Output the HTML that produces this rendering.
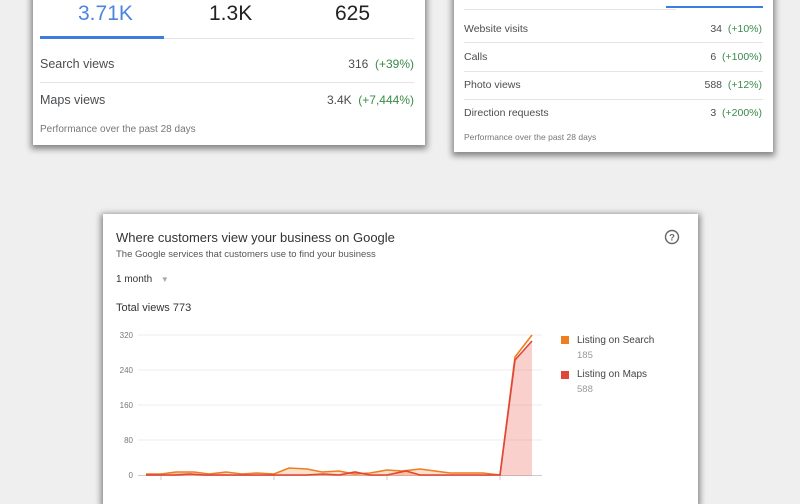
<!DOCTYPE html>
<html><head><style>
*{margin:0;padding:0;box-sizing:border-box}
body{width:800px;height:480px;background:#efefef;font-family:"Liberation Sans",sans-serif;position:relative;overflow:hidden;color:#4a4d50}
.card{position:absolute;background:#fff;box-shadow:0 2px 6px 2px rgba(0,0,0,.45)}
.abs{position:absolute;white-space:nowrap}
.g{color:#3a8a4a}
.line{position:absolute;height:1px;background:#e4e4e4}
</style></head><body>
<div class="card" style="left:33px;top:-10px;width:392px;height:155px">
  <div class="abs" style="left:45px;top:12px;font-size:21px;color:#4a86e0">3.71K</div>
  <div class="abs" style="left:176px;top:12px;font-size:21px;color:#222">1.3K</div>
  <div class="abs" style="left:302px;top:12px;font-size:21px;color:#222">625</div>
  <div style="position:absolute;left:7px;top:46px;width:124px;height:3px;background:#3b7de0"></div>
  <div class="line" style="left:131px;top:48px;width:250px"></div>
  <div class="abs" style="left:7px;top:67px;font-size:12.5px">Search views</div>
  <div class="abs" style="right:11px;top:67px;font-size:12px">316 &nbsp;<span class="g">(+39%)</span></div>
  <div class="line" style="left:7px;top:92px;width:374px"></div>
  <div class="abs" style="left:7px;top:103px;font-size:12.5px">Maps views</div>
  <div class="abs" style="right:11px;top:103px;font-size:12px">3.4K &nbsp;<span class="g">(+7,444%)</span></div>
  <div class="abs" style="left:7px;top:134px;font-size:10px;color:#777">Performance over the past 28 days</div>
</div>
<div class="card" style="left:454px;top:-10px;width:319px;height:162px">
  <div style="position:absolute;left:212px;top:16px;width:97px;height:2px;background:#3b7de0"></div>
  <div class="line" style="left:10px;top:19px;width:212px"></div>
  <div class="abs" style="left:10px;top:33px;font-size:10.5px">Website visits</div>
  <div class="abs" style="right:11px;top:33px;font-size:10.5px">34 &nbsp;<span class="g">(+10%)</span></div>
  <div class="line" style="left:10px;top:52px;width:299px"></div>
  <div class="abs" style="left:10px;top:61px;font-size:10.5px">Calls</div>
  <div class="abs" style="right:11px;top:61px;font-size:10.5px">6 &nbsp;<span class="g">(+100%)</span></div>
  <div class="line" style="left:10px;top:81px;width:299px"></div>
  <div class="abs" style="left:10px;top:89px;font-size:10.5px">Photo views</div>
  <div class="abs" style="right:11px;top:89px;font-size:10.5px">588 &nbsp;<span class="g">(+12%)</span></div>
  <div class="line" style="left:10px;top:109px;width:299px"></div>
  <div class="abs" style="left:10px;top:117px;font-size:10.5px">Direction requests</div>
  <div class="abs" style="right:11px;top:117px;font-size:10.5px">3 &nbsp;<span class="g">(+200%)</span></div>
  <div class="abs" style="left:10px;top:142px;font-size:8.5px;color:#777">Performance over the past 28 days</div>
</div>
<div class="card" style="left:103px;top:214px;width:595px;height:290px">
  <div class="abs" style="left:13px;top:16px;font-size:13px;color:#333">Where customers view your business on Google</div>
  <div class="abs" style="left:13px;top:35px;font-size:9.5px;color:#555">The Google services that customers use to find your business</div>
  <div class="abs" style="left:13px;top:60px;font-size:10px;color:#333">1 month <span style="color:#aaa;font-size:8px;margin-left:6px">▼</span></div>
  <div class="abs" style="left:13px;top:88px;font-size:11px;color:#333">Total views 773</div>
  <svg style="position:absolute;left:561px;top:15px" width="18" height="18" viewBox="0 0 18 18"><circle cx="8" cy="8" r="6.5" fill="none" stroke="#666" stroke-width="1.4"/><text x="8" y="11.5" font-size="9.5" text-anchor="middle" fill="#666" font-family="Liberation Sans" font-weight="bold">?</text></svg>
</div>
<svg style="position:absolute;left:0;top:0" width="800" height="480">
  <g stroke="#eee" stroke-width="1"><line x1="138" y1="335" x2="542" y2="335"/><line x1="138" y1="370" x2="542" y2="370"/><line x1="138" y1="405" x2="542" y2="405"/><line x1="138" y1="440" x2="542" y2="440"/></g>
  <line x1="138" y1="475.5" x2="542" y2="475.5" stroke="#ccc"/>
  <g stroke="#ccc"><line x1="161" y1="475" x2="161" y2="480"/><line x1="274" y1="475" x2="274" y2="480"/><line x1="387" y1="475" x2="387" y2="480"/><line x1="500" y1="475" x2="500" y2="480"/></g>
  <g font-size="8" fill="#777" font-family="Liberation Sans" text-anchor="end"><text x="133" y="338">320</text><text x="133" y="373">240</text><text x="133" y="408">160</text><text x="133" y="443">80</text><text x="133" y="478">0</text></g>
  <polygon points="146,474 161,474 176,473 190,473 205,475 219,473 236,475 252,475 274,475 290,475 305,475 324,474 339,475 355,472 370,475 387,475 406,471 420,475 452,475 469,475 484,475 500,475 515,360 532,341 532,476 146,476" fill="rgba(240,120,110,.35)"/>
  <polygon points="146,474 161,474 176,472 194,472 209,474 226,472 242,474 257,473 274,474 289,468 307,469 322,472 339,471 354,474 370,473 387,470 402,471 420,469 435,471 450,473 467,473 483,473 500,475 500,476 146,476" fill="rgba(245,160,80,.3)"/>
  <polyline points="146,474 161,474 176,472 194,472 209,474 226,472 242,474 257,473 274,474 289,468 307,469 322,472 339,471 354,474 370,473 387,470 402,471 420,469 435,471 450,473 467,473 483,473 500,475 515,357 532,335" fill="none" stroke="#ef7d22" stroke-width="1.6"/>
  <polyline points="146,475 161,475 176,475 190,474 205,475 219,475 236,475 252,475 274,475 290,475 305,475 324,474 339,475 355,472 370,475 387,475 406,471 420,475 452,475 469,475 484,475 500,475 515,360 532,341" fill="none" stroke="#e0453a" stroke-width="1.6"/>
  <rect x="561" y="336" width="8" height="8" fill="#ef7d22"/>
  <rect x="561" y="371" width="8" height="8" fill="#e0453a"/>
  <g font-family="Liberation Sans"><text x="577" y="343" font-size="10" fill="#444">Listing on Search</text><text x="577" y="358" font-size="9.5" fill="#999">185</text>
  <text x="577" y="377" font-size="10" fill="#444">Listing on Maps</text><text x="577" y="392" font-size="9.5" fill="#999">588</text></g>
</svg>
</body></html>
